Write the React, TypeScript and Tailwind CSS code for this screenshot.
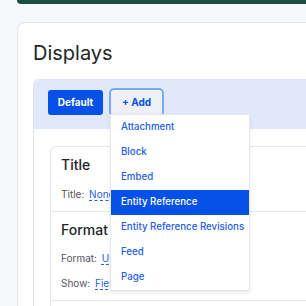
import React from "react";

const items = [
  "Attachment",
  "Block",
  "Embed",
  "Entity Reference",
  "Entity Reference Revisions",
  "Feed",
  "Page",
];

function AddMenu() {
  // DROPDOWN UNDER THE ADD BUTTON
  return (
    <div className="absolute left-[-1px] top-[24px] z-10 w-[140px] bg-white border border-[#e6e8ee] shadow-[0_2px_4px_rgba(0,0,0,0.08)]">
      {items.map((item) => (
        <div
          key={item}
          className={
            item === "Entity Reference"
              ? "h-[25px] flex items-center whitespace-nowrap px-[10px] text-[9.7px] font-medium bg-[#0550e6] text-white"
              : "h-[25px] flex items-center whitespace-nowrap px-[10px] text-[9.7px] font-medium text-[#2560e3]"
          }
        >
          {item}
        </div>
      ))}
    </div>
  );
}

function Row({ label, value }: { label: string; value: string }) {
  return (
    <div className="whitespace-nowrap text-[10px] leading-[14px] text-[#545560]">
      {label}:{" "}
      <span className="ml-[2px] text-[#2560e3] underline decoration-dashed underline-offset-2">
        {value}
      </span>
    </div>
  );
}

export default function App() {
  return (
    <div
      className="relative h-[306px] w-[306px] overflow-hidden bg-[#f7f8fc]"
      style={{ fontFamily: "Inter, 'Noto Sans', sans-serif" }}
    >
      <div className="ml-[17px] h-[4px] rounded-bl-[6px] bg-[#184f3e]" />

      <div className="mt-[18px] ml-[17px] min-h-[300px] rounded-tl-[8px] border border-r-0 border-[#e6e8ee] bg-white pl-[15px] pt-[18px]">
        <h1 className="text-[20px] leading-[24px] text-[#232429]">Displays</h1>

        <div className="mt-[14px] rounded-tl-[6px] border border-r-0 border-[#dde2ec]">
          {/* TAB BAR */}
          <div className="flex h-[49px] items-start gap-[8px] rounded-tl-[6px] bg-[#e1e8f9] pl-[14px] pt-[10px]">
            <button className="block h-[25px] w-[55px] rounded-[3px] bg-[#0550e6] text-[10px] font-bold text-white">
              Default
            </button>
            <div className="relative h-[25px]">
              <button className="block h-[25px] w-[51px] rounded-[3px] bg-[#eef0f6] text-[10px] font-bold text-[#0550e6] ring-2 ring-[#78aaf4]">
                + Add
              </button>
              <AddMenu />
            </div>
          </div>

          {/* TAB CONTENT */}
          <div className="pl-[16px] pt-[17px]">
            <div className="rounded-tl-[6px] border border-r-0 border-[#e4e6eb]">
              <div className="border-b border-[#e4e6eb] pl-[10px] pt-[8px] pb-[10px]">
                <h2 className="text-[14px] leading-[20px] font-medium text-[#232429]">Title</h2>
                <div className="mt-[12px]">
                  <Row label="Title" value="None" />
                </div>
              </div>
              <div className="border-b border-[#e4e6eb] pl-[10px] pt-[8px] pb-[10px]">
                <h2 className="text-[14px] leading-[20px] font-medium text-[#232429]">Format</h2>
                <div className="mt-[11px]">
                  <Row label="Format" value="Unformatted list" />
                </div>
                <div className="mt-[11px]">
                  <Row label="Show" value="Fields" />
                </div>
              </div>
              <div className="h-[40px]" />
            </div>
          </div>
        </div>
      </div>
    </div>
  );
}
